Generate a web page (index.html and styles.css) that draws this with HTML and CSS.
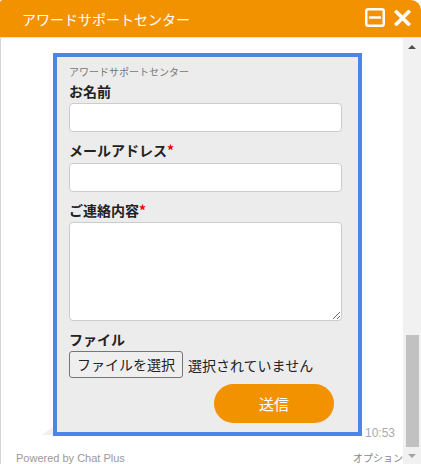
FILE: index.html
```html
<!DOCTYPE html>
<html lang="ja">
<head>
    <meta charset="UTF-8">
    <meta name="viewport" content="width=device-width, initial-scale=1.0">
    <title>アワードサポートセンター</title>
    <link rel="stylesheet" href="styles.css">
</head>
<body>
    <div class="widget">
        <header class="bar">
            <span class="bar-title">アワードサポートセンター</span>
            <div class="bar-icons">
                <svg width="20" height="19" viewBox="0 0 20 19">
                    <rect x="1.25" y="1.25" width="17.5" height="16.5" rx="2" fill="none" stroke="#fff" stroke-width="2.5"/>
                    <path d="M4 9.5H16" stroke="#fff" stroke-width="2.5"/>
                </svg>
                <svg width="19" height="16" viewBox="0 0 19 16">
                    <path d="M3.5 2L15.5 14M15.5 2L3.5 14" stroke="#fff" stroke-width="3.6" stroke-linecap="square"/>
                </svg>
            </div>
        </header>

        <div class="body">
            <div class="pane">
                <div class="chat">
                    <div class="bubble">
                        <form class="form" onsubmit="return false">
                            <p class="form-title">アワードサポートセンター</p>

                            <label class="label first">お名前</label>
                            <input class="field" type="text">

                            <label class="label">メールアドレス<span class="req">*</span></label>
                            <input class="field field-mail" type="text">

                            <label class="label">ご連絡内容<span class="req">*</span></label>
                            <textarea class="field area"></textarea>

                            <label class="label">ファイル</label>
                            <div class="file">
                                <span class="file-btn">ファイルを選択</span>
                                <span class="file-none">選択されていません</span>
                            </div>

                            <button class="send" type="submit">送信</button>
                        </form>
                    </div>
                    <span class="time">10:53</span>
                </div>
                <div class="foot">
                    <span class="powered">Powered by Chat Plus</span>
                    <span class="option">オプション</span>
                </div>
            </div>

            <div class="scroll">
                <div class="scroll-end"><span class="arrow-up"></span></div>
                <div class="thumb"></div>
                <div class="scroll-end"><span class="arrow-down"></span></div>
            </div>
        </div>
    </div>
</body>
</html>
```

FILE: styles.css
```css
* {
    margin: 0;
    padding: 0;
    box-sizing: border-box;
}

body {
    font-family: "Noto Sans CJK JP", "Liberation Sans", sans-serif;
    background: #fff;
    color: #222;
}

.widget {
    width: 421px;
    height: 464px;
    overflow: hidden;
}

/* header bar */
.bar {
    height: 38px;
    background-color: #f39200;
    border-radius: 3px 10px 0 0;
    border-bottom: 1px solid #e4e4e4;
    display: flex;
    align-items: center;
    justify-content: space-between;
    padding: 0 9px 0 22px;
}

.bar-title {
    color: #fff;
    font-size: 14px;
    line-height: 20px;
}

.bar-icons {
    display: flex;
    align-items: center;
    gap: 8px;
    margin-top: -2px;
}

.bar-icons svg {
    display: block;
}

/* body */
.body {
    height: 426px;
    display: flex;
}

.pane {
    flex: 1;
    display: flex;
    flex-direction: column;
    border-left: 1px solid #d4d4d4;
}

.chat {
    height: 398px;
    padding: 15px 0 0 52px;
    display: flex;
    align-items: flex-end;
}

.bubble {
    position: relative;
    width: 309px;
    height: 383px;
    border: 4px solid #4a86e8;
    background-color: #ececec;
}

.bubble::before {
    content: "";
    position: absolute;
    left: -15px;
    bottom: -3px;
    width: 0;
    height: 0;
    border-bottom: 8px solid #efefef;
    border-left: 11px solid transparent;
}

.time {
    margin: 0 0 -4px 3px;
    font-family: "Liberation Sans", sans-serif;
    font-size: 12px;
    line-height: 13px;
    color: #aaa;
}

/* form */
.form {
    display: flex;
    flex-direction: column;
    align-items: flex-start;
    padding: 8px 16px 0 12px;
}

.form-title {
    font-size: 10px;
    line-height: 14px;
    color: #777;
}

.label {
    font-size: 14px;
    line-height: 20px;
    font-weight: bold;
    color: #222;
    margin-top: 8px;
    margin-bottom: 1px;
}

.label.first {
    margin-top: 2px;
}

.req {
    color: #e00;
}

.field {
    display: block;
    width: 273px;
    height: 29px;
    margin-top: 1px;
    border: 1px solid #ccc;
    border-radius: 4px;
    background: #fff;
    font-size: 14px;
}

.field-mail {
    margin-top: 2px;
}

.area {
    height: 99px;
    resize: both;
}

.file {
    display: flex;
    align-items: center;
    gap: 5px;
    margin-top: 1px;
    font-size: 14px;
}

.file-btn {
    height: 27px;
    line-height: 25px;
    padding: 0 7px;
    border: 1px solid #767676;
    border-radius: 3px;
    background: #efefef;
    color: #222;
}

.file-none {
    color: #222;
}

.send {
    align-self: flex-end;
    margin: 6px 8px 0 0;
    width: 120px;
    height: 39px;
    border: none;
    border-radius: 20px;
    background-color: #f39200;
    color: #fff;
    font-family: "Noto Sans CJK JP", sans-serif;
    font-size: 15px;
    cursor: pointer;
}

/* footer */
.foot {
    flex: 1;
    display: flex;
    justify-content: space-between;
    padding: 15px 0 0 15px;
    line-height: 14px;
}

.powered {
    font-family: "Liberation Sans", sans-serif;
    font-size: 11px;
    color: #999;
}

.option {
    font-size: 10px;
    color: #888;
}

/* scrollbar */
.scroll {
    width: 18px;
    background: #f1f1f1;
    display: flex;
    flex-direction: column;
    align-items: center;
}

.scroll-end {
    height: 17px;
    width: 100%;
    display: flex;
    justify-content: center;
    padding-top: 7px;
}

.arrow-up {
    width: 0;
    height: 0;
    border-left: 4px solid transparent;
    border-right: 4px solid transparent;
    border-bottom: 4px solid #505050;
}

.arrow-down {
    width: 0;
    height: 0;
    border-left: 4px solid transparent;
    border-right: 4px solid transparent;
    border-top: 4px solid #a3a3a3;
}

.thumb {
    margin-top: auto;
    width: 13px;
    height: 112px;
    background: #c1c1c1;
}
```
